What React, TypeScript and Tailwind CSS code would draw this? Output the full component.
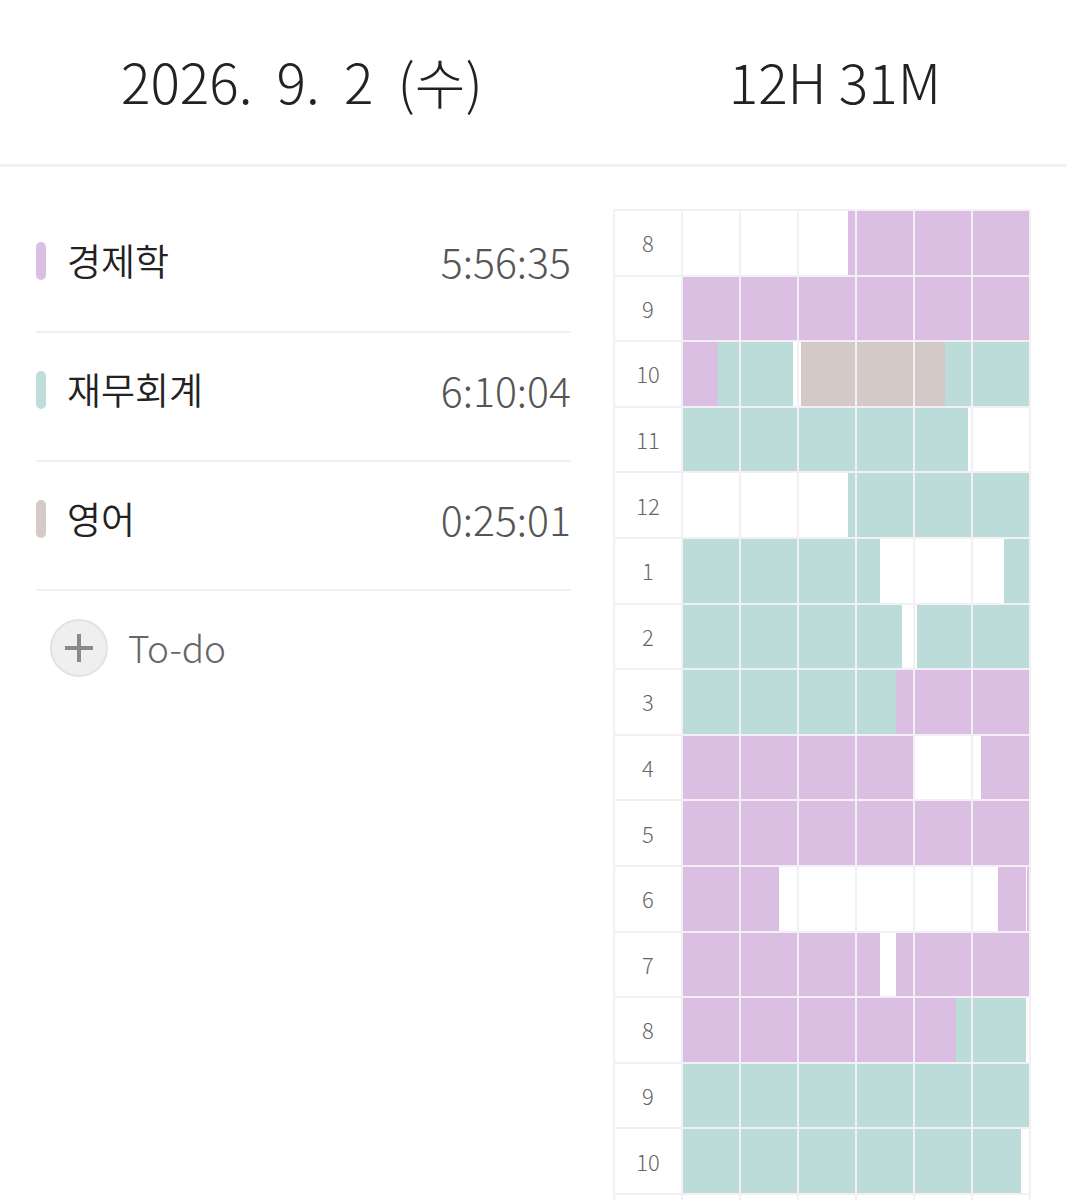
import React from "react";

type Subject = "econ" | "acct" | "eng";

const fills: Record<Subject, string> = {
    econ: "bg-[#dbbfe3]",
    acct: "bg-[#bcdcd9]",
    eng: "bg-[#d5c9c7]",
};

const subjects = [
    { id: "econ" as Subject, name: "경제학", time: "5:56:35", bar: "bg-[#d9bfe2]" },
    { id: "acct" as Subject, name: "재무회계", time: "6:10:04", bar: "bg-[#bfdedb]" },
    { id: "eng" as Subject, name: "영어", time: "0:25:01", bar: "bg-[#d6cac8]" },
];

// minutes within the hour: [start, end, subject]
const hours: { label: string; segs: [number, number, Subject][] }[] = [
    { label: "8", segs: [[28.8, 60, "econ"]] },
    { label: "9", segs: [[0, 60, "econ"]] },
    { label: "10", segs: [[0, 6.3, "econ"], [6.3, 19.2, "acct"], [20.3, 45.3, "eng"], [45.3, 60, "acct"]] },
    { label: "11", segs: [[0, 49.5, "acct"]] },
    { label: "12", segs: [[28.8, 60, "acct"]] },
    { label: "1", segs: [[0, 34.1, "acct"], [55.5, 60, "acct"]] },
    { label: "2", segs: [[0, 38.1, "acct"], [40.3, 60, "acct"]] },
    { label: "3", segs: [[0, 37, "acct"], [37, 60, "econ"]] },
    { label: "4", segs: [[0, 40, "econ"], [51.4, 60, "econ"]] },
    { label: "5", segs: [[0, 60, "econ"]] },
    { label: "6", segs: [[0, 16.7, "econ"], [54.5, 59.4, "econ"], [59.7, 60, "econ"]] },
    { label: "7", segs: [[0, 34.1, "econ"], [37, 60, "econ"]] },
    { label: "8", segs: [[0, 47.4, "econ"], [47.4, 59.5, "acct"]] },
    { label: "9", segs: [[0, 60, "acct"]] },
    { label: "10", segs: [[0, 58.6, "acct"]] },
    { label: "", segs: [] },
];

function Cell({ index, segs }: { index: number; segs: [number, number, Subject][] }) {
    const from = index * 10;
    const to = from + 10;
    return (
        <div className="relative h-[63.6px] overflow-hidden bg-white">
            {segs.map(([s, e, subject], i) => {
                const a = Math.max(s, from);
                const b = Math.min(e, to);
                if (b <= a) return null;
                return (
                    <div
                        key={i}
                        className={`absolute top-0 bottom-0 ${fills[subject]}`}
                        style={{ left: `${(a - from) * 10}%`, width: `${(b - a) * 10}%` }}
                    />
                );
            })}
        </div>
    );
}

export default function App() {
    return (
        <div className="min-h-[1200px] bg-white font-['Noto_Sans_CJK_KR','Noto_Sans',sans-serif] text-[#222]">
            <header className="flex h-[167px] items-center border-b-[3px] border-[#f1f1f4] pb-[4px]">
                <div className="w-[606px] text-center text-[55px] font-light [word-spacing:12px]">2026. 9. 2 (수)</div>
                <div className="w-[464px] text-center text-[55px] font-light">12H 31M</div>
            </header>

            <main className="flex">
                <section className="ml-[36px] mt-[37px] w-[535px]">
                    {subjects.map((subject) => (
                        <div
                            key={subject.id}
                            className="flex h-[129px] items-center border-b-2 border-[#f0f0f3] pb-[14px]"
                        >
                            <span className={`h-[38px] w-[10px] rounded-full ${subject.bar}`} />
                            <span className="ml-[21px] text-[37px] font-[350]">{subject.name}</span>
                            <span className="ml-auto text-[41px] font-light text-[#555]">{subject.time}</span>
                        </div>
                    ))}
                    <div className="flex h-[127px] items-center pb-[14px]">
                        <span className="ml-[14px] flex h-[58px] w-[58px] items-center justify-center rounded-full border-2 border-[#e3e3e3] bg-[#efefef]">
                            <svg width="32" height="32" viewBox="0 0 32 32">
                                <path d="M16 2v28M2 16h28" stroke="#8a8a8a" strokeWidth="4" />
                            </svg>
                        </span>
                        <span className="ml-[20px] text-[37px] font-light text-[#666]">To-do</span>
                    </div>
                </section>

                <section className="ml-[42px] mt-[42px]">
                    <div className="grid grid-cols-[66px_repeat(6,56px)] gap-[2px] bg-[#f2f0f5] p-[2px] pb-0">
                        {hours.map((hour, r) => (
                            <React.Fragment key={r}>
                                <div className="flex h-[63.6px] items-center justify-center bg-white text-[22px] font-light text-[#666]">
                                    {hour.label}
                                </div>
                                {[0, 1, 2, 3, 4, 5].map((c) => (
                                    <Cell key={c} index={c} segs={hour.segs} />
                                ))}
                            </React.Fragment>
                        ))}
                    </div>
                </section>
            </main>
        </div>
    );
}
